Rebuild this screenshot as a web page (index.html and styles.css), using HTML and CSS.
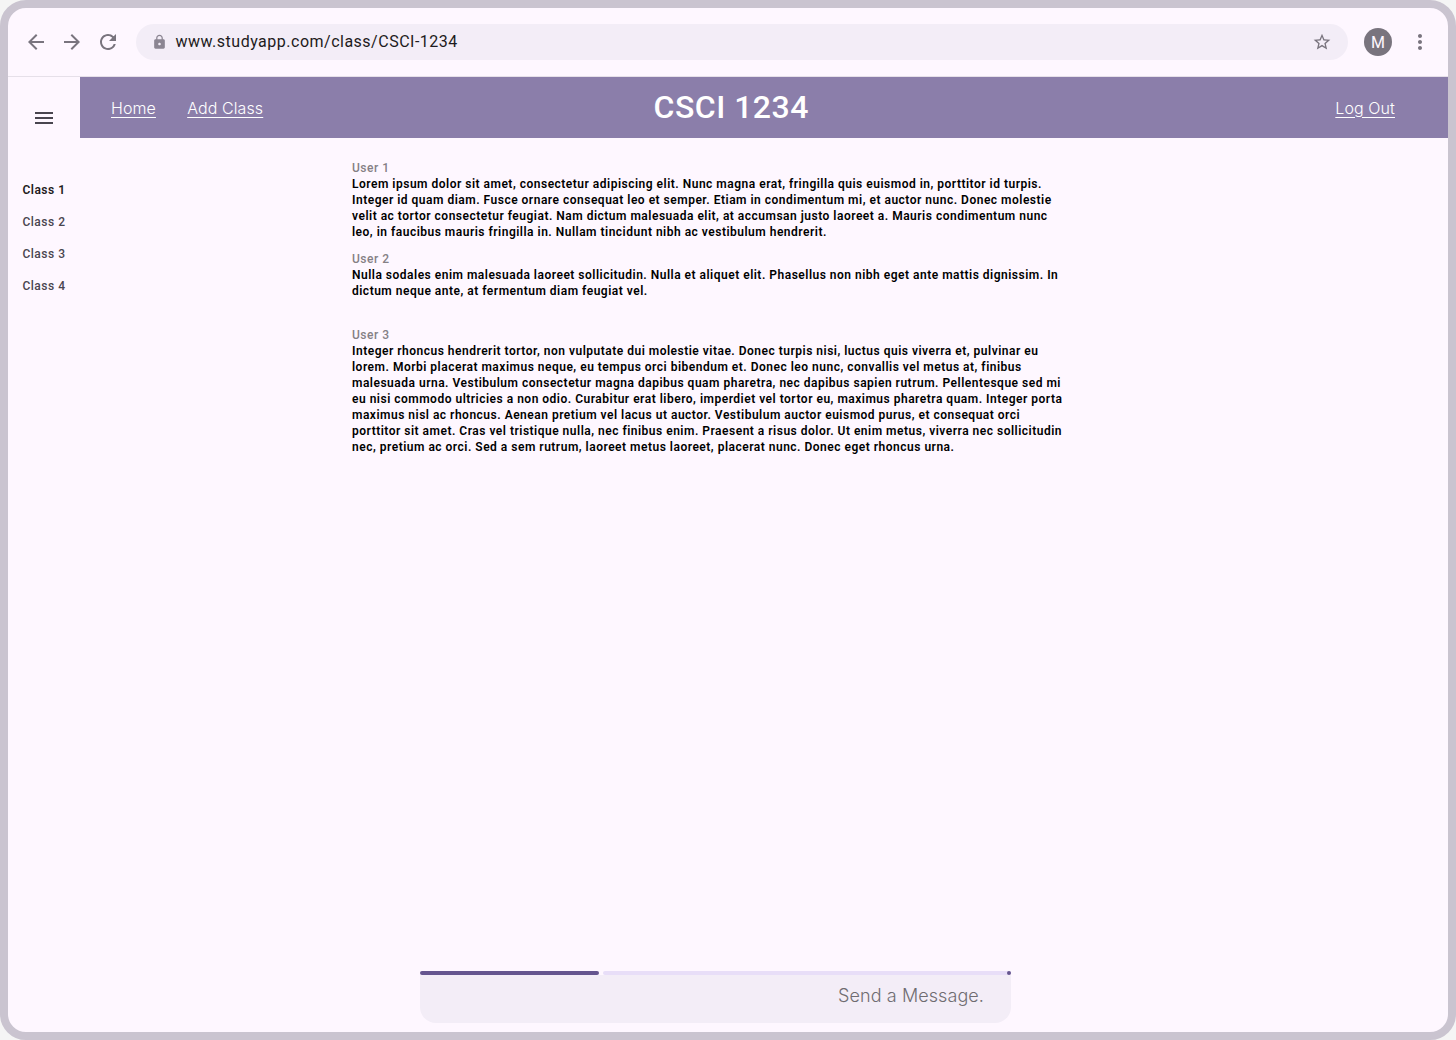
FILE: index.html
```html
<!DOCTYPE html>
<html lang="en">
<head>
<meta charset="utf-8">
<title>CSCI 1234</title>
<link rel="stylesheet" href="styles.css">
</head>
<body>
<div class="window">
  <header class="toolbar">
    <div class="controls">
      <svg class="icon" viewBox="0 0 24 24"><path d="M20 11H7.83l5.59-5.59L12 4l-8 8 8 8 1.41-1.41L7.83 13H20v-2z"/></svg>
      <svg class="icon" viewBox="0 0 24 24"><path d="M12 4l-1.41 1.41L16.17 11H4v2h12.17l-5.58 5.59L12 20l8-8z"/></svg>
      <svg class="icon" viewBox="0 0 24 24"><path d="M17.65 6.35A7.958 7.958 0 0 0 12 4c-4.42 0-7.99 3.58-7.99 8s3.57 8 7.99 8c3.73 0 6.84-2.55 7.73-6h-2.08A5.99 5.99 0 0 1 12 18c-3.31 0-6-2.69-6-6s2.69-6 6-6c1.66 0 3.14.69 4.22 1.78L13 11h7V4l-2.35 2.35z"/></svg>
    </div>
    <div class="address">
      <svg class="lock" viewBox="0 0 24 24"><path d="M18 8h-1V6c0-2.76-2.24-5-5-5S7 3.24 7 6v2H6c-1.1 0-2 .9-2 2v10c0 1.1.9 2 2 2h12c1.1 0 2-.9 2-2V10c0-1.100-.9-2-2-2zm-6 9c-1.100 0-2-.9-2-2s.9-2 2-2 2 .9 2 2-.9 2-2 2zm3.100-9H8.900V6c0-1.710 1.390-3.100 3.100-3.100s3.100 1.390 3.100 3.100v2z"/></svg>
      <span class="url">www.studyapp.com/class/CSCI-1234</span>
      <svg class="star" viewBox="0 0 24 24"><path d="M22 9.240l-7.190-.62L12 2 9.190 8.630 2 9.240l5.460 4.730L5.820 21 12 17.270 18.180 21l-1.630-7.030L22 9.240zM12 15.400l-3.760 2.270 1-4.280-3.320-2.880 4.380-.38L12 6.100l1.710 4.040 4.380.38-3.320 2.880 1 4.280L12 15.400z"/></svg>
    </div>
    <div class="avatar">M</div>
    <svg class="icon" viewBox="0 0 24 24"><path d="M12 8c1.100 0 2-.9 2-2s-.9-2-2-2-2 .9-2 2 .9 2 2 2zm0 2c-1.100 0-2 .9-2 2s.9 2 2 2 2-.9 2-2-.9-2-2-2zm0 6c-1.100 0-2 .9-2 2s.9 2 2 2 2-.9 2-2-.9-2-2-2z"/></svg>
  </header>
  <div class="page">
    <aside class="rail">
      <svg class="icon menu" viewBox="0 0 24 24"><path d="M3 18h18v-2H3v2zm0-5h18v-2H3v2zm0-7v2h18V6H3z"/></svg>
      <nav class="classes">
        <a class="class current">Class 1</a>
        <a class="class">Class 2</a>
        <a class="class">Class 3</a>
        <a class="class">Class 4</a>
      </nav>
    </aside>
    <main class="main">
      <div class="banner">
        <nav class="links"><a class="link">Home</a><a class="link">Add Class</a></nav>
        <h1 class="title">CSCI 1234</h1>
        <a class="link logout">Log Out</a>
      </div>
      <section class="messages">
        <article class="message">
          <div class="user">User 1</div>
          <p class="text">Lorem ipsum dolor sit amet, consectetur adipiscing elit. Nunc magna erat, fringilla quis euismod in, porttitor id turpis.<br>Integer id quam diam. Fusce ornare consequat leo et semper. Etiam in condimentum mi, et auctor nunc. Donec molestie<br>velit ac tortor consectetur feugiat. Nam dictum malesuada elit, at accumsan justo laoreet a. Mauris condimentum nunc<br>leo, in faucibus mauris fringilla in. Nullam tincidunt nibh ac vestibulum hendrerit.</p>
        </article>
        <article class="message second">
          <div class="user">User 2</div>
          <p class="text">Nulla sodales enim malesuada laoreet sollicitudin. Nulla et aliquet elit. Phasellus non nibh eget ante mattis dignissim. In<br>dictum neque ante, at fermentum diam feugiat vel.</p>
        </article>
        <article class="message third">
          <div class="user">User 3</div>
          <p class="text">Integer rhoncus hendrerit tortor, non vulputate dui molestie vitae. Donec turpis nisi, luctus quis viverra et, pulvinar eu<br>lorem. Morbi placerat maximus neque, eu tempus orci bibendum et. Donec leo nunc, convallis vel metus at, finibus<br>malesuada urna. Vestibulum consectetur magna dapibus quam pharetra, nec dapibus sapien rutrum. Pellentesque sed mi<br>eu nisi commodo ultricies a non odio. Curabitur erat libero, imperdiet vel tortor eu, maximus pharetra quam. Integer porta<br>maximus nisl ac rhoncus. Aenean pretium vel lacus ut auctor. Vestibulum auctor euismod purus, et consequat orci<br>porttitor sit amet. Cras vel tristique nulla, nec finibus enim. Praesent a risus dolor. Ut enim metus, viverra nec sollicitudin<br>nec, pretium ac orci. Sed a sem rutrum, laoreet metus laoreet, placerat nunc. Donec eget rhoncus urna.</p>
        </article>
      </section>
      <div class="composer">
        <div class="progress"><span class="done"></span><span class="track"><span class="stop"></span></span></div>
        <div class="field">Send a Message.</div>
      </div>
    </main>
  </div>
</div>
</body>
</html>
```

FILE: styles.css
```css
* { box-sizing: border-box; }
body {
  margin: 0;
  background: #f5f5f5;
  font-family: Roboto, "Liberation Sans", sans-serif;
}
.window {
  display: flex;
  flex-direction: column;
  width: 1456px;
  height: 1040px;
  border: 8px solid #cac4d0;
  border-radius: 26px;
  background: #fef7ff;
  overflow: hidden;
}
.toolbar {
  display: flex;
  align-items: center;
  flex: none;
  height: 69px;
  padding: 0 16px;
  border-bottom: 1px solid #e6e0e9;
}
.icon { flex: none; width: 24px; height: 24px; fill: #79747e; }
.controls { display: flex; gap: 12px; }
.address {
  display: flex;
  align-items: center;
  flex: none;
  width: 1212px;
  height: 36px;
  margin: 0 16px;
  padding: 0 16px 0 15px;
  border-radius: 18px;
  background: #f3edf7;
}
.lock { width: 17px; height: 16px; fill: #8b8592; }
.url { flex: 1; margin-left: 7.5px; font-size: 16px; letter-spacing: 0.5px; line-height: 24px; color: #1d1b20; }
.star { width: 20px; height: 20px; fill: #79747e; }
.avatar {
  flex: none;
  width: 28px;
  height: 28px;
  margin-right: 16px;
  border-radius: 50%;
  background: #79747e;
  color: #fef7ff;
  font-size: 16px;
  line-height: 29px;
  text-align: center;
}
.page { display: flex; flex: 1; min-height: 0; }
.rail { display: flex; flex-direction: column; align-items: center; width: 72px; padding-top: 29px; }
.menu { fill: #49454f; }
.classes { display: flex; flex-direction: column; gap: 16px; margin-top: 52px; }
.class { font-size: 12px; line-height: 16px; font-weight: 500; letter-spacing: 0.5px; color: #49454f; white-space: nowrap; }
.current { font-weight: 600; color: #1d1b20; }
.main { display: flex; flex-direction: column; flex: 1; }
.banner {
  display: grid;
  grid-template-columns: 542.5px auto 1fr;
  align-items: center;
  height: 61px;
  padding: 0 53px 0 31px;
  background: #8b7eaa;
  color: #fff;
}
.links { display: flex; gap: 31.2px; }
.link {
  font-family: Inter, sans-serif;
  font-size: 16px;
  font-weight: 300;
  letter-spacing: 0.1px;
  line-height: 24px;
  text-decoration: underline;
  text-underline-offset: 3px;
}
.title { margin: 0 0 2px; font-size: 32px; line-height: 40px; font-weight: 500; letter-spacing: 0.5px; }
.logout { justify-self: end; }
.messages { padding: 22px 0 0 272px; }
.user, .text { margin: 0; font-size: 12px; line-height: 16px; letter-spacing: 0.5px; white-space: nowrap; }
.user { font-weight: 500; color: #858085; }
.text { font-weight: 600; color: #000; }
.second { margin-top: 11px; }
.third { margin-top: 28px; }
.composer { width: 591px; margin: auto 0 9px 340px; }
.progress { display: flex; gap: 4px; height: 4px; }
.done { width: 179px; border-radius: 2px; background: #65558f; }
.track { display: flex; justify-content: flex-end; flex: 1; border-radius: 2px; background: #e8def8; }
.stop { width: 4px; height: 4px; border-radius: 50%; background: #65558f; }
.field {
  height: 48px;
  padding: 9px 27px 0 0;
  border-radius: 0 0 16px 16px;
  background: #f3edf7;
  font-family: Inter, sans-serif;
  font-size: 18px;
  font-weight: 300;
  letter-spacing: 0.08px;
  line-height: 24px;
  text-align: right;
  color: #6f6c71;
}
```
